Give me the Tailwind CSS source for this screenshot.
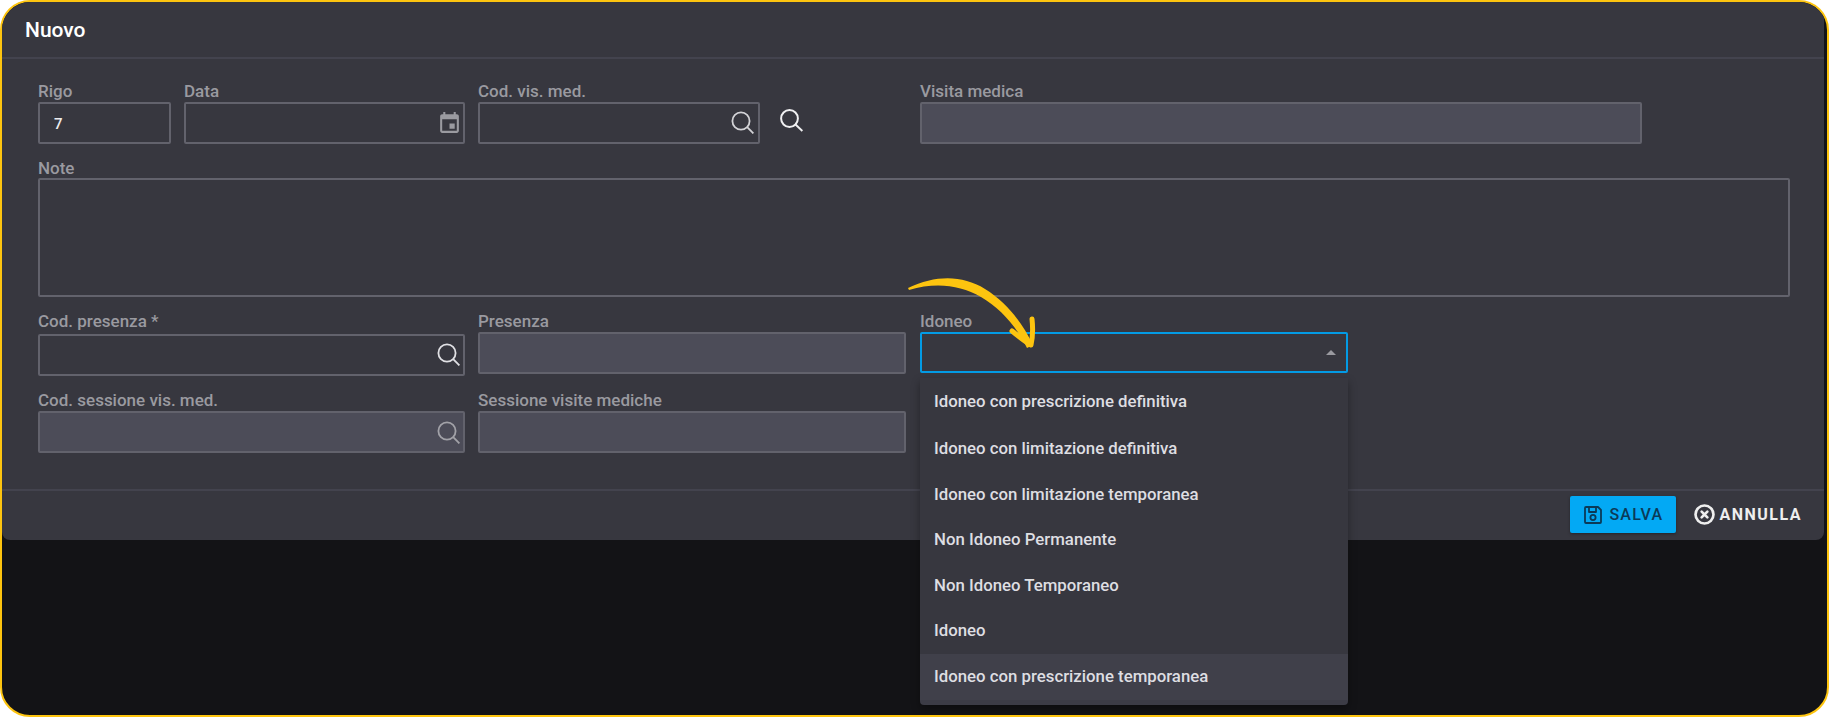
<!DOCTYPE html>
<html lang="en">
<head>
    <meta charset="UTF-8">
    <title>Nuovo</title>
    <script src="https://cdn.jsdelivr.net/npm/@tailwindcss/browser@4"></script>
</head>
<body class="bg-white font-['Roboto',sans-serif]">
    <div class="relative w-[1829px] h-[717px] overflow-hidden rounded-[30px] border-2 border-[#fdc40f] bg-[#131316]">
        <!-- dialog -->
        <div class="w-[1822px] h-[538px] flex flex-col rounded-b-lg bg-[#37373f]">
            <div class="h-[57px] flex items-center pl-[23px] pt-[3px] border-b-2 border-[#43434e]">
                <h1 class="text-[21px] font-medium text-white">Nuovo</h1>
            </div>

            <div class="flex-1 pl-[36px] pt-[24px] border-b-2 border-[#43434e]">
                <!-- first row -->
                <div class="flex">
                    <div class="w-[133px]">
                        <label class="block h-[19px] text-[17px] leading-[16px] font-medium text-[#9a9aa0]">Rigo</label>
                        <input value="7" class="w-full h-[42px] pl-[14px] pt-[2px] text-[15px] font-medium text-[#ececee] bg-transparent border-2 border-[#62626c] rounded-[2px] outline-none">
                    </div>
                    <div class="w-[281px] ml-[13px]">
                        <label class="block h-[19px] text-[17px] leading-[16px] font-medium text-[#9a9aa0]">Data</label>
                        <div class="relative">
                            <input class="w-full h-[42px] bg-transparent border-2 border-[#62626c] rounded-[2px] outline-none">
                            <svg class="absolute right-[3px] top-[9px] w-[25px] h-[25px]" viewBox="0 0 24 24" fill="#9a9aa0"><path d="M17 12h-5v5h5v-5zM16 1v2H8V1H6v2H5c-1.11 0-1.99.9-1.99 2L3 19c0 1.1.89 2 2 2h14c1.1 0 2-.9 2-2V5c0-1.1-.9-2-2-2h-1V1h-2zm3 18H5V8h14v11z"/></svg>
                        </div>
                    </div>
                    <div class="w-[282px] ml-[13px]">
                        <label class="block h-[19px] text-[17px] leading-[16px] font-medium text-[#9a9aa0]">Cod. vis. med.</label>
                        <div class="relative">
                            <input class="w-full h-[42px] bg-transparent border-2 border-[#62626c] rounded-[2px] outline-none">
                            <svg class="absolute right-[6px] top-[9px] w-[23px] h-[23px]" viewBox="0 0 23 23" fill="none" stroke="#d2d2d6" stroke-width="1.8"><circle cx="10" cy="10" r="8.6"/><path d="M16.2 16.2 22.4 22.4"/></svg>
                        </div>
                    </div>
                    <svg class="ml-[20px] mt-[26px] w-[23px] h-[23px]" viewBox="0 0 23 23" fill="none" stroke="#f0f0f2" stroke-width="2"><circle cx="9.5" cy="9.5" r="8.4"/><path d="M15.5 15.5 22.4 22"/></svg>
                    <div class="w-[722px] ml-[117px]">
                        <label class="block h-[19px] text-[17px] leading-[16px] font-medium text-[#9a9aa0]">Visita medica</label>
                        <input disabled class="w-full h-[42px] bg-[#4c4c58] border-2 border-[#62626c] rounded-[2px]">
                    </div>
                </div>

                <!-- note -->
                <div class="mt-[15px] w-[1752px]">
                    <label class="block h-[19px] pt-[1px] text-[17px] leading-[16px] font-medium text-[#9a9aa0]">Note</label>
                    <textarea class="block w-full h-[119px] bg-transparent border-2 border-[#62626c] rounded-[2px] outline-none resize-none"></textarea>
                </div>

                <!-- third row -->
                <div class="flex mt-[15px]">
                    <div class="w-[427px]">
                        <label class="block h-[22px] pt-[1px] text-[17px] leading-[16px] font-medium text-[#9a9aa0]">Cod. presenza *</label>
                        <div class="relative">
                            <input class="w-full h-[42px] bg-transparent border-2 border-[#62626c] rounded-[2px] outline-none">
                            <svg class="absolute right-[5px] top-[9px] w-[23px] h-[23px]" viewBox="0 0 23 23" fill="none" stroke="#e0e0e4" stroke-width="1.8"><circle cx="10" cy="10" r="8.6"/><path d="M16.2 16.2 22.4 22.4"/></svg>
                        </div>
                    </div>
                    <div class="w-[428px] ml-[13px]">
                        <label class="block h-[20px] pt-[1px] text-[17px] leading-[16px] font-medium text-[#9a9aa0]">Presenza</label>
                        <input disabled class="w-full h-[42px] bg-[#4c4c58] border-2 border-[#62626c] rounded-[2px]">
                    </div>
                    <div class="w-[428px] ml-[14px]">
                        <label class="block h-[20px] pt-[1px] text-[17px] leading-[16px] font-medium text-[#9a9aa0]">Idoneo</label>
                        <div class="h-[41px] flex items-center justify-end pr-[10px] border-2 border-[#039be5] rounded-[2px]">
                            <span class="w-0 h-0 border-x-[5px] border-x-transparent border-b-[5px] border-b-[#9a9aa0]"></span>
                        </div>
                    </div>
                </div>

                <!-- fourth row -->
                <div class="flex mt-[15px]">
                    <div class="w-[427px]">
                        <label class="block h-[20px] pt-[1px] text-[17px] leading-[16px] font-medium text-[#9a9aa0]">Cod. sessione vis. med.</label>
                        <div class="relative">
                            <input disabled class="w-full h-[42px] bg-[#4c4c58] border-2 border-[#62626c] rounded-[2px]">
                            <svg class="absolute right-[5px] top-[10px] w-[23px] h-[23px]" viewBox="0 0 23 23" fill="none" stroke="#a2a2a8" stroke-width="1.8"><circle cx="10" cy="10" r="8.6"/><path d="M16.2 16.2 22.4 22.4"/></svg>
                        </div>
                    </div>
                    <div class="w-[428px] ml-[13px]">
                        <label class="block h-[20px] pt-[1px] text-[17px] leading-[16px] font-medium text-[#9a9aa0]">Sessione visite mediche</label>
                        <input disabled class="w-full h-[42px] bg-[#4c4c58] border-2 border-[#62626c] rounded-[2px]">
                    </div>
                </div>
            </div>

            <!-- footer -->
            <div class="h-[49px] flex items-center justify-end pr-[22px] pb-[2px]">
                <button class="w-[106px] h-[37px] flex items-center justify-center gap-[6px] bg-[#03a9f4] rounded-[2px] text-base font-medium tracking-[1.2px] text-[#0b3a58] shadow-[0_1px_3px_rgba(0,0,0,0.35)]">
                    <svg class="w-[20px] h-[20px]" viewBox="0 0 20 20" fill="none" stroke="#0b3a58" stroke-width="1.8" stroke-linejoin="round"><path d="M2 3a1 1 0 0 1 1-1h12l3 3v12a1 1 0 0 1-1 1H3a1 1 0 0 1-1-1z"/><path d="M6 2v5h7V2"/><circle cx="10" cy="12.5" r="2.6"/></svg>
                    SALVA
                </button>
                <button class="ml-[18px] flex items-center gap-[4px] text-base font-bold tracking-[1.5px] text-[#eeeeee]">
                    <svg class="w-[21px] h-[21px]" viewBox="0 0 22 22" fill="none" stroke="#eeeeee" stroke-width="2.8" stroke-linecap="round"><circle cx="11" cy="11" r="9.4"/><path d="M8 8 14 14M14 8 8 14"/></svg>
                    ANNULLA
                </button>
            </div>
        </div>

        <!-- open select menu -->
        <div class="absolute left-[918px] top-[376px] w-[428px] h-[327px] flex flex-col rounded-b-[4px] bg-[#3c3c46] text-[16.8px] font-medium text-[#dedee2] shadow-[0_4px_8px_rgba(0,0,0,0.35)]">
            <div class="h-[47px] flex items-center pl-[14px] bg-[#37373f]">Idoneo con prescrizione definitiva</div>
            <div class="h-[47px] flex items-center pl-[14px] bg-[#37373f]">Idoneo con limitazione definitiva</div>
            <div class="h-[45px] flex items-center pl-[14px] bg-[#37373f]">Idoneo con limitazione temporanea</div>
            <div class="h-[46px] flex items-center pl-[14px] bg-[#37373f]">Non Idoneo Permanente</div>
            <div class="h-[45px] flex items-center pl-[14px] bg-[#37373f]">Non Idoneo Temporaneo</div>
            <div class="h-[46px] flex items-center pl-[14px] bg-[#37373f]">Idoneo</div>
            <div class="h-[46px] flex items-center pl-[14px] bg-[#40404a]">Idoneo con prescrizione temporanea</div>
        </div>

        <!-- yellow arrow annotation -->
        <svg class="absolute left-[898px] top-[268px] w-[150px] h-[90px]" viewBox="0 0 150 90" fill="none">
            <path d="M8 18C36 5 62 5 85 19 106 32 122 52 133 75L127 78C116 56 101 39 81 27 60 15 36 12 9 20Z" fill="#fdc40f"/>
            <path d="M132 49C133 58 133 66 131 75 124 71 118 66 112 61" stroke="#fdc40f" stroke-width="5" stroke-linecap="round" stroke-linejoin="round"/>
        </svg>
    </div>
</body>
</html>
